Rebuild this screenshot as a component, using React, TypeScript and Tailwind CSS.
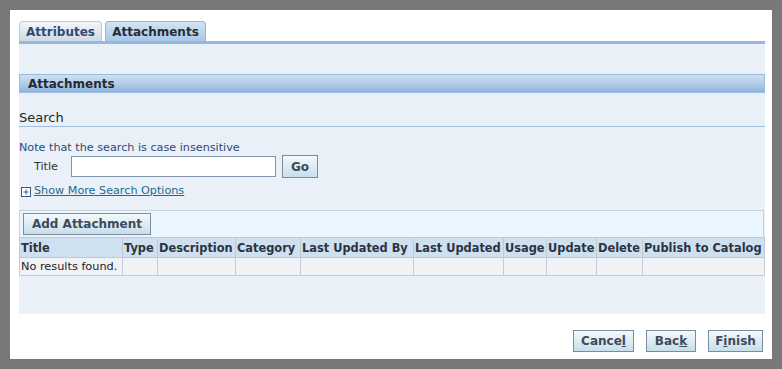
import React from 'react';

const cols = [
  { label: 'Title', w: 'w-[103px]' },
  { label: 'Type', w: 'w-[35px]' },
  { label: 'Description', w: 'w-[78px]' },
  { label: 'Category', w: 'w-[65px]' },
  { label: 'Last Updated By', w: 'w-[113px]' },
  { label: 'Last Updated', w: 'w-[90px]' },
  { label: 'Usage', w: 'w-[43px]' },
  { label: 'Update', w: 'w-[50px]' },
  { label: 'Delete', w: 'w-[46px]' },
  { label: 'Publish to Catalog', w: 'w-[122px]' },
];

function Btn({ children, className }: { children: React.ReactNode; className?: string }) {
  return (
    <button
      className={`h-[22px] border border-[#7d8ba0] bg-gradient-to-b from-[#f4f9fb] to-[#c6dfea] text-[12px] font-bold text-[#3d4b5c] ${className ?? ''}`}
    >
      {children}
    </button>
  );
}

export default function App() {
  return (
    <div className="h-[369px] w-[782px] bg-[#787878] pl-[10px] pt-[10px] font-['DejaVu_Sans',sans-serif]">
      <div className="flex h-[349px] w-[762px] flex-col bg-white pl-[9px] pt-[11px]">
        {/* Tabs */}
        <div className="flex h-[20px] items-end gap-[3px]">
          <div className="flex h-[20px] w-[83px] items-center justify-center rounded-t-[4px] border border-b-0 border-[#bcc8d6] bg-gradient-to-b from-[#f3f6f9] to-[#cfd9e4] text-[12px] font-bold text-[#2d4a72]">
            Attributes
          </div>
          <div className="flex h-[20px] w-[101px] items-center justify-center rounded-t-[4px] border border-b-0 border-[#95b6da] bg-gradient-to-b from-[#d4e3f2] to-[#a9c7e6] text-[12px] font-bold text-[#262d36]">
            Attachments
          </div>
        </div>
        <div className="h-[3px] w-[746px] bg-[#94b8de]" />

        {/* Content */}
        <div className="flex h-[270px] w-[746px] flex-col bg-[#eaf0f8] pt-[30px]">
          <div className="flex h-[19px] items-center border border-[#9dbde0] bg-gradient-to-b from-[#cfe0f1] via-[#b3cde8] to-[#8fb5dc] pl-[8px] text-[12px] font-bold text-[#232a33]">
            Attachments
          </div>

          <div className="mt-[17px] h-[17px] border-b border-[#9cc0e4] text-[13px] leading-[16px] text-[#262626]">
            Search
          </div>

          <div className="mt-[14px] text-[11.2px] leading-[14px] text-[#284a7c]">
            Note that the search is case insensitive
          </div>

          <div className="flex h-[23px] items-center">
            <span className="ml-[15px] w-[37px] pt-[2px] text-[11.2px] text-[#333]">Title</span>
            <input className="h-[21px] w-[205px] border border-[#7f93ad] bg-white" />
            <Btn className="ml-[6px] h-[23px] w-[36px]">Go</Btn>
          </div>

          <div className="mt-[7px] flex h-[13px] items-center">
            <svg width="10" height="10" viewBox="0 0 10 10" className="ml-[2px] mr-[3px]">
              <rect x="0.5" y="0.5" width="9" height="9" fill="#fff" stroke="#3a5a82" />
              <path d="M2.5 5h5M5 2.5v5" stroke="#3a5a82" strokeWidth="1" />
            </svg>
            <span className="text-[11.2px] text-[#1d6b8e] underline">Show More Search Options</span>
          </div>

          {/* Table */}
          <div className="mt-[12px] flex h-[27px] w-[745px] items-center border border-b-0 border-[#c8d1da] bg-[#eaf6fd] px-[3px]">
            <Btn className="w-[128px]">Add Attachment</Btn>
          </div>
          <table className="w-[745px] table-fixed border-collapse">
            <colgroup>
              {cols.map((c) => (
                <col key={c.label} className={c.w} />
              ))}
            </colgroup>
            <thead>
              <tr className="h-[20px] bg-[#cfe0f1]">
                {cols.map((c) => (
                  <th
                    key={c.label}
                    className="whitespace-nowrap border border-[#c3c9d1] px-[1px] py-0 text-left text-[11.4px] leading-[14px] font-bold text-[#2b3440]"
                  >
                    {c.label}
                  </th>
                ))}
              </tr>
            </thead>
            <tbody>
              <tr className="h-[18px] bg-[#f1f2f6]">
                <td className="whitespace-nowrap border border-[#c8ccd2] px-[1px] py-0 text-[11.3px] leading-[14px] text-[#222]">
                  No results found.
                </td>
                {cols.slice(1).map((c) => (
                  <td key={c.label} className="border border-[#c8ccd2]" />
                ))}
              </tr>
            </tbody>
          </table>
        </div>

        {/* Footer buttons */}
        <div className="mt-[16px] flex w-[744px] justify-end gap-[12px]">
          <Btn className="w-[61px]">
            Cance<span className="underline">l</span>
          </Btn>
          <Btn className="w-[50px]">
            Bac<span className="underline">k</span>
          </Btn>
          <Btn className="w-[55px]">
            F<span className="underline">i</span>nish
          </Btn>
        </div>
      </div>
    </div>
  );
}
